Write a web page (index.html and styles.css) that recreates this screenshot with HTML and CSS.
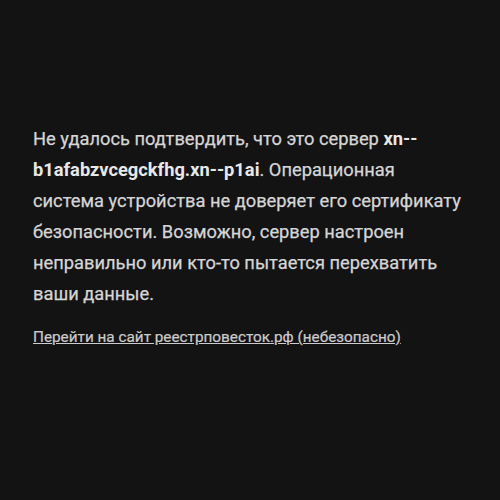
FILE: index.html
```html
<!DOCTYPE html>
<html lang="ru">
<head>
<meta charset="utf-8">
<link rel="stylesheet" href="styles.css">
</head>
<body>
<main class="page">
  <p class="message">Не удалось подтвердить, что это сервер <b>xn--b1afabzvcegckfhg.xn--p1ai</b>. Операционная система устройства не доверяет его сертификату безопасности. Возможно, сервер настроен неправильно или кто-то пытается перехватить ваши данные.</p>
  <a class="proceed" href="#">Перейти на сайт реестрповесток.рф (небезопасно)</a>
</main>
</body>
</html>
```
FILE: styles.css
```css
html, body {
  margin: 0;
  padding: 0;
  background: #131313;
  height: 100%;
}
.page {
  box-sizing: border-box;
  width: 500px;
  height: 500px;
  padding: 123px 32px 0 33px;
  font-family: Roboto, "Noto Sans", sans-serif;
  color: #d6d6d6;
}
.message {
  margin: 0;
  font-size: 18.3px;
  line-height: 31px;
  -webkit-text-stroke: 0.25px #d6d6d6;
}
.message b {
  font-weight: 700;
  color: #e8e8e8;
  -webkit-text-stroke: 0;
}
.proceed {
  display: inline-block;
  margin-top: 19px;
  font-size: 15.3px;
  color: #cccccc;
  text-decoration: underline;
  -webkit-text-stroke: 0.2px #cccccc;
}
```
